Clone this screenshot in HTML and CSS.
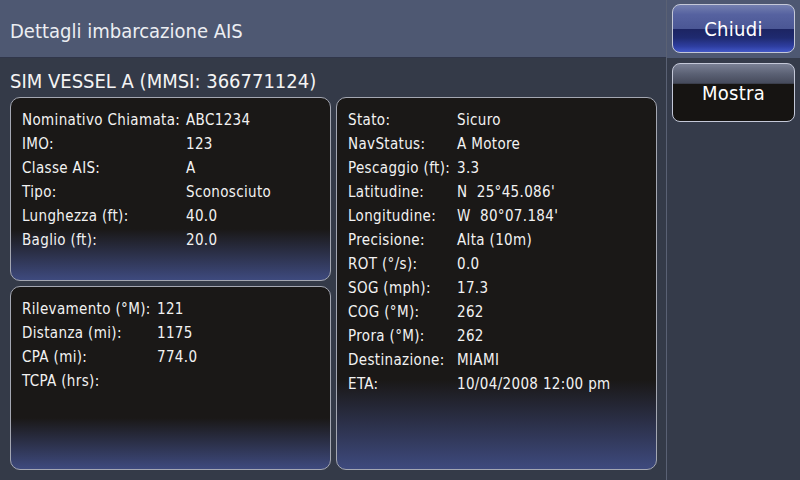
FILE: index.html
```html
<!DOCTYPE html>
<html lang="it">
<head>
<meta charset="utf-8">
<title>Dettagli imbarcazione AIS</title>
<link rel="stylesheet" href="styles.css">
</head>
<body>
<div class="app">
  <div class="main">
    <header class="topbar">
      <h1 class="topbar-title">Dettagli imbarcazione AIS</h1>
    </header>
    <div class="content">
      <h2 class="vessel">SIM VESSEL A (MMSI: 366771124)</h2>
      <div class="panels">
        <section class="panel panel-ident">
          <dl class="rows">
            <dt>Nominativo Chiamata:</dt><dd>ABC1234</dd>
            <dt>IMO:</dt><dd>123</dd>
            <dt>Classe AIS:</dt><dd>A</dd>
            <dt>Tipo:</dt><dd>Sconosciuto</dd>
            <dt>Lunghezza (ft):</dt><dd>40.0</dd>
            <dt>Baglio (ft):</dt><dd>20.0</dd>
          </dl>
        </section>
        <section class="panel panel-nav">
          <dl class="rows">
            <dt>Stato:</dt><dd>Sicuro</dd>
            <dt>NavStatus:</dt><dd>A Motore</dd>
            <dt>Pescaggio (ft):</dt><dd>3.3</dd>
            <dt>Latitudine:</dt><dd>N&nbsp;&nbsp;25°45.086'</dd>
            <dt>Longitudine:</dt><dd>W&nbsp;&nbsp;80°07.184'</dd>
            <dt>Precisione:</dt><dd>Alta (10m)</dd>
            <dt>ROT (°/s):</dt><dd>0.0</dd>
            <dt>SOG (mph):</dt><dd>17.3</dd>
            <dt>COG (°M):</dt><dd>262</dd>
            <dt>Prora (°M):</dt><dd>262</dd>
            <dt>Destinazione:</dt><dd>MIAMI</dd>
            <dt>ETA:</dt><dd>10/04/2008 12:00 pm</dd>
          </dl>
        </section>
        <section class="panel panel-track">
          <dl class="rows">
            <dt>Rilevamento (°M):</dt><dd>121</dd>
            <dt>Distanza (mi):</dt><dd>1175</dd>
            <dt>CPA (mi):</dt><dd>774.0</dd>
            <dt>TCPA (hrs):</dt><dd></dd>
          </dl>
        </section>
      </div>
    </div>
  </div>
  <aside class="sidebar">
    <button class="btn btn-close" type="button">Chiudi</button>
    <button class="btn btn-show" type="button">Mostra</button>
  </aside>
</div>
</body>
</html>
```
FILE: styles.css
```css
* { box-sizing: border-box; }

html, body {
  margin: 0;
  padding: 0;
  width: 800px;
  height: 480px;
  overflow: hidden;
  background: #343a48;
}

body {
  font-family: "DejaVu Sans Condensed", "DejaVu Sans", sans-serif;
  font-stretch: condensed;
  color: #f2f2f2;
}

.app {
  display: flex;
  width: 800px;
  height: 480px;
}

.main {
  width: 666px;
  display: flex;
  flex-direction: column;
}

.topbar {
  height: 58px;
  background: #4e5872;
  border-bottom: 1px solid #30364a;
  padding: 19px 0 0 10px;
}

.topbar-title {
  margin: 0;
  font-size: 20px;
  line-height: 24px;
  font-weight: normal;
  color: #eceef2;
}

.content {
  flex: 1;
  padding: 11px 9px 10px 10px;
}

.vessel {
  margin: 0 0 4px 0;
  font-size: 20px;
  line-height: 24px;
  font-weight: normal;
  color: #f4f4f4;
}

.panels {
  display: grid;
  grid-template-columns: 321px 321px;
  grid-template-rows: 184px 184px;
  gap: 5px;
}

.panel {
  border: 1px solid #a4a7b2;
  border-radius: 10px;
  padding: 10px 11px;
  background: linear-gradient(to bottom, #1a1817 0%, #1a1817 72%, #3e4a7e 100%);
}

.panel-ident { grid-column: 1; grid-row: 1; }
.panel-track { grid-column: 1; grid-row: 2; }
.panel-nav {
  grid-column: 2;
  grid-row: 1 / span 2;
  background: linear-gradient(to bottom, #1a1817 0%, #1a1817 76%, #3e4a7e 100%);
}

.rows {
  margin: 0;
  display: grid;
  font-size: 15px;
  line-height: 24px;
  letter-spacing: 0.35px;
}

.panel-ident .rows { grid-template-columns: 164px 1fr; }
.panel-track .rows { grid-template-columns: 135px 1fr; }
.panel-nav .rows { grid-template-columns: 109px 1fr; }

.rows dt, .rows dd {
  margin: 0;
  white-space: nowrap;
  height: 24px;
}

.sidebar {
  flex: 1;
  border-left: 1px solid #5a6174;
  background: linear-gradient(to bottom, #4e5872 0, #4e5872 58px, #353b4a 58px, #353b4a 100%);
  display: flex;
  flex-direction: column;
  align-items: stretch;
  padding: 4px 5px 0 5px;
  gap: 10px;
}

.btn {
  font-family: inherit;
  font-stretch: condensed;
  font-size: 20px;
  letter-spacing: 0.3px;
  color: #ffffff;
  border: 1px solid #c4c8d8;
  border-radius: 8px;
  padding: 0;
  width: 123px;
}

.btn-close {
  height: 49px;
  background: linear-gradient(to bottom, #7480b0 0%, #5662a0 20%, #4b5795 50%, #1c2462 51%, #1f2a70 70%, #2e3ea0 88%, #4257c8 100%);
}

.btn-show {
  height: 59px;
  background: linear-gradient(to bottom, #7a8094 0%, #5a6073 18%, #454a5b 34%, #161412 35%, #161412 100%);
}
```
